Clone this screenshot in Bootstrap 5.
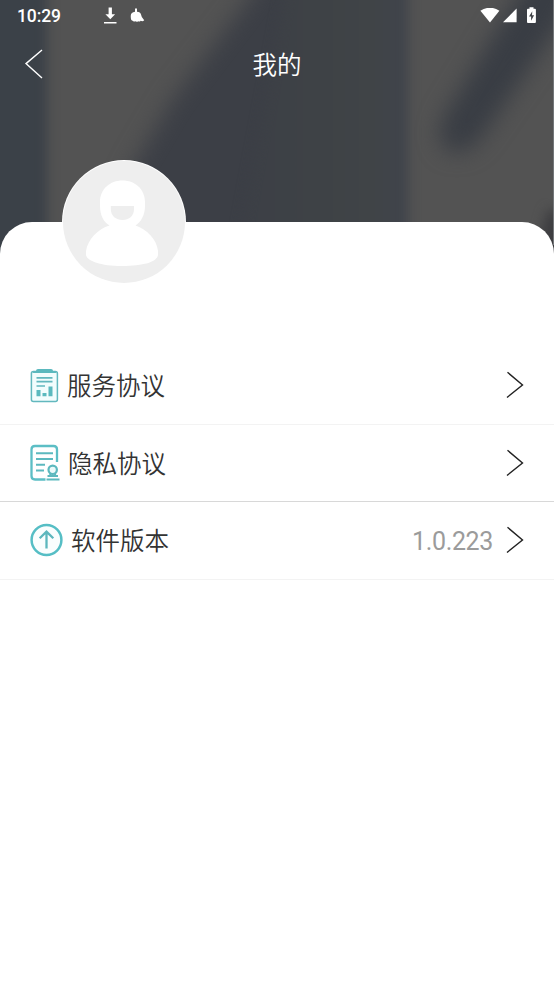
<!DOCTYPE html>
<html lang="zh-CN">
<head>
<meta charset="utf-8">
<meta name="viewport" content="width=device-width, initial-scale=1">
<title>我的</title>
<link href="https://cdn.jsdelivr.net/npm/bootstrap@5.3.0/dist/css/bootstrap.min.css" rel="stylesheet">
<style>
body{font-family:Roboto,"Noto Sans CJK SC",sans-serif;background:#fff}
svg{display:block;flex:none}
.screen{height:984px;overflow:hidden}
.hero{height:222px;color:#fff}
.backdrop{position:absolute;left:0;top:0;z-index:0}
.status{height:31px;padding:0 17px}
.clock{width:86px;font-size:17.5px;font-weight:500;line-height:30px;padding-top:1px;letter-spacing:-.1px}
.titlebar{height:66px;padding-left:24px}
.heading{font-size:24.5px;line-height:36px;font-weight:350;padding-top:3px}
.side{width:20px}
.sheet{height:762px;background:#fff;border-radius:32px 32px 0 0;z-index:1}
.profile{height:125px;padding-left:62px}
.avatar{margin-top:-62px}
.entry{height:77.5px;padding:0 30px;border-bottom:1px solid #f3f3f3;color:#333}
.entry.strong{border-color:#d8d8d8}
.caption{font-size:24.5px;font-weight:350;margin-left:8px;padding-top:5px}
.version{font-size:25px;line-height:36px;color:#9b9b9b;margin-right:13px;padding-top:3px;letter-spacing:-.35px}
</style>
</head>
<body>
<main class="screen position-relative">
<svg class="backdrop" width="554" height="260" viewBox="0 0 554 260" aria-hidden="true">
<defs>
<filter id="soft" x="-20%" y="-20%" width="140%" height="140%" color-interpolation-filters="sRGB"><feGaussianBlur stdDeviation="11"/></filter>
<filter id="edge" x="-50%" y="-20%" width="200%" height="140%" color-interpolation-filters="sRGB"><feGaussianBlur stdDeviation="6"/></filter>
<linearGradient id="mid" x1="0" x2="1"><stop offset="0" stop-color="#3c3f46"/><stop offset=".5" stop-color="#3e4246"/><stop offset=".8" stop-color="#404447"/><stop offset="1" stop-color="#40444c"/></linearGradient>
</defs>
<rect width="554" height="260" fill="#535353"/>
<path d="M-30-30H47V290H-30Z" fill="#3b4148" filter="url(#edge)"/>
<path d="M272-40L248 0L172 100L134 165L75 290H330V-40Z" fill="#3c3f46" filter="url(#soft)"/>
<path d="M290-30H408V290H230Z" fill="url(#mid)" filter="url(#edge)"/>
<path d="M535-30L503 20L445 115Q432 144 452 152Q470 155 485 132L560 24L590-30Z" fill="#393d44" filter="url(#soft)"/>
<path d="M548 210H570V270H530Z" fill="#3d3d40" filter="url(#edge)"/>
<path d="M553 0h1v245h-1z" fill="#74777a"/>
</svg>
<header class="hero position-relative">
<div class="status d-flex align-items-center">
<span class="clock">10:29</span>
<svg width="14" height="18" viewBox="0 0 14 18"><path d="M5.600 .5h3.300v6.800h3.200L7.300 12.300L2.400 7.300h3.200ZM1 15h12.500v1.600H1Z" fill="#fff"/></svg>
<svg class="ms-auto" width="20" height="16" viewBox="0 0 20 16"><path d="M.4 2.800Q10-3.400 19.400 2.800L10 14.600Z" fill="#fff"/></svg>
<svg width="14" height="15" viewBox="0 0 14 15" style="margin-left:3px"><path d="M0 14.200L13.600 .5V14.200Z" fill="#fff"/></svg>
<svg width="10" height="18" viewBox="0 0 10 18" style="margin-left:10px"><path d="M2.500 .2h4v1.600h1.400q1 0 1 1V15q0 1-1 1H1q-1 0-1-1V2.800q0-1 1-1h1.500Z" fill="#fff"/><path d="M5.300 4.300L2 9.500h2.100V13.800L7.100 8.200H5Z" fill="#424448"/></svg>
</div>
<svg class="position-absolute" width="15" height="15" viewBox="0 0 15 15" style="left:130px;top:8px"><path d="M5 .4h2v3.300Q10.500 4 10.800 6L11 6.500Q11.300 9.500 14.200 12.200 12.600 13.900 10.600 12.700 9.800 14.200 8.200 13.200 6.800 14.300 5.300 13.300 3.400 14 2.600 12.800 .3 12.300 .8 7.300Q1 4.300 5 3.700Z" fill="#fff"/></svg>
<div class="titlebar d-flex align-items-center justify-content-between">
<svg class="side" width="20" height="32" viewBox="0 0 20 32"><path d="M18 2L2 15.600L18 30" fill="none" stroke="#fff" stroke-width="1.400"/></svg>
<h1 class="heading m-0">我的</h1>
<span class="side me-4"></span>
</div>
</header>
<section class="sheet position-relative">
<div class="profile">
<svg class="avatar float-start" width="124" height="124" viewBox="0 0 124 124"><circle cx="62" cy="62" r="62" fill="#fff"/><circle cx="62" cy="62" r="61" fill="#eee"/><path d="M60.500 20.500C73 20.500 83 29 83 42V46C83 55 79 62 73.500 65.500C85 69 95 80 96 91V95C95 102 81 106 60 106S25 101 24 95V91C26 79 36 69 47.500 65.500C41.500 62 38 55 38 46V42C38 29 48 20.500 60.500 20.500Z" fill="#fff"/><path d="M48.800 46H72V49C72 56 67 60 60.500 60S48.800 56 48.800 49Z" fill="#eee"/></svg>
</div>
<div class="entry d-flex align-items-center">
<svg width="29" height="35" viewBox="0 0 29 35"><rect x="1.400" y="3.600" width="26" height="30" rx="2" fill="#f2fdfd" stroke="#62b8be" stroke-width="1.500"/><path d="M8 1h13q2 0 2 2 3 0 3.200 2H2.800Q3 3 6 3 6 1 8 1Z" fill="#5bb9be"/><path d="M6.500 9.800h16M6.500 13.700h16M6.500 18h8.500" stroke="#62b8be" stroke-width="1.700"/><path d="M6.500 22h4v6.300h-4ZM12.500 25h4v3.300h-4ZM18.500 18.500h4v9.800h-4Z" fill="#5bb9be"/></svg>
<span class="caption">服务协议</span>
<svg class="ms-auto" width="18" height="28" viewBox="0 0 18 28"><path d="M1.500 1.300L16.500 14L1 26.500" fill="none" stroke="#222" stroke-width="1.400"/></svg>
</div>
<div class="entry strong d-flex align-items-center">
<svg width="30" height="38" viewBox="0 0 30 38"><path d="M15.500 35.500H5Q1.500 35.500 1.500 32V5.500Q1.500 2 5 2H23.500Q27 2 27 5.500V18" fill="none" stroke="#5cbec5" stroke-width="2.300"/><path d="M6 9.200h17M6 15h17M6 20.800h9M6 26.500h8" stroke="#5cb9bf" stroke-width="2"/><circle cx="22.700" cy="25.800" r="4.200" fill="#eafafa" stroke="#5bb9be" stroke-width="2.200"/><path d="M20.300 29.500v2M25.100 29.500v2M17.500 32h10.500M16.500 35.500h13" stroke="#5bb9be" stroke-width="2"/></svg>
<span class="caption">隐私协议</span>
<svg class="ms-auto" width="18" height="28" viewBox="0 0 18 28"><path d="M1.500 1.300L16.500 14L1 26.500" fill="none" stroke="#222" stroke-width="1.400"/></svg>
</div>
<div class="entry d-flex align-items-center">
<svg width="33" height="34" viewBox="0 0 33 34"><circle cx="16.500" cy="17" r="14.900" fill="#fafefe" stroke="#56bec5" stroke-width="2.500"/><path d="M16.500 25.500V9M9.700 15.300L16.500 8.600L23.300 15.300" fill="none" stroke="#5db7bd" stroke-width="2.300"/></svg>
<span class="caption">软件版本</span>
<span class="version ms-auto">1.0.223</span>
<svg width="18" height="28" viewBox="0 0 18 28"><path d="M1.500 1.300L16.500 14L1 26.500" fill="none" stroke="#222" stroke-width="1.400"/></svg>
</div>
</section>
</main>
<script src="https://cdn.jsdelivr.net/npm/bootstrap@5.3.0/dist/js/bootstrap.bundle.min.js"></script>
</body>
</html>
